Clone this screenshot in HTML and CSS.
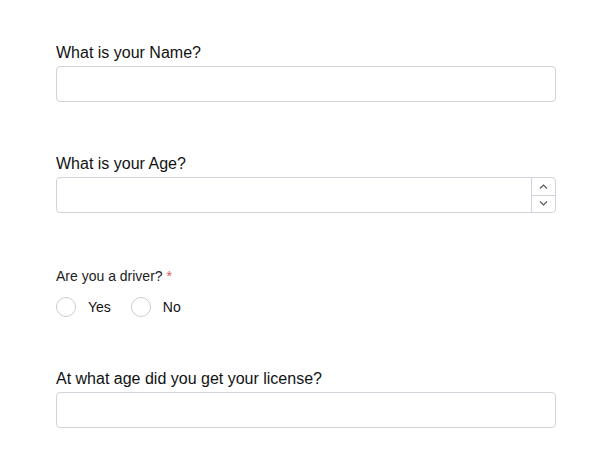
FILE: index.html
```html
<!DOCTYPE html>
<html>
<head>
<meta charset="utf-8">
<link rel="stylesheet" href="styles.css">
</head>
<body>
<form class="form">
  <div class="field">
    <label class="label" for="name">What is your Name?</label>
    <input class="input" id="name" type="text">
  </div>
  <div class="field">
    <label class="label" for="age">What is your Age?</label>
    <div class="number">
      <input class="input number-input" id="age" type="text">
      <div class="spinner">
        <span class="spin-btn">
          <svg width="9" height="5" viewBox="0 0 9 5"><path d="M1 4.5 L4.5 1 L8 4.5" fill="none" stroke="#555" stroke-width="1.1"/></svg>
        </span>
        <span class="spin-btn spin-down">
          <svg width="9" height="5" viewBox="0 0 9 5"><path d="M1 0.5 L4.5 4 L8 0.5" fill="none" stroke="#555" stroke-width="1.1"/></svg>
        </span>
      </div>
    </div>
  </div>
  <div class="field radio-field">
    <div class="small-label">Are you a driver? <span class="req">*</span></div>
    <div class="radios">
      <label class="radio"><span class="circle"></span>Yes</label>
      <label class="radio"><span class="circle"></span>No</label>
    </div>
  </div>
  <div class="field">
    <label class="label" for="lic">At what age did you get your license?</label>
    <input class="input" id="lic" type="text">
  </div>
</form>
</body>
</html>
```
FILE: styles.css
```css
html, body {
  margin: 0;
  padding: 0;
  background: #fff;
  font-family: "Liberation Sans", Arial, sans-serif;
  color: #111;
}
.form {
  width: 500px;
  padding: 43px 0 0 56px;
  display: flex;
  flex-direction: column;
  gap: 52px;
}
.field {
  display: flex;
  flex-direction: column;
}
.label {
  font-size: 16px;
  line-height: 20px;
  margin-bottom: 3px;
  color: #111;
}
.input {
  box-sizing: border-box;
  width: 500px;
  height: 36px;
  border: 1px solid #ced4da;
  border-radius: 4px;
  background: #fff;
  margin: 0;
  padding: 0 10px;
  font: inherit;
  outline: none;
}
.number {
  position: relative;
  width: 500px;
  height: 36px;
}
.spinner {
  position: absolute;
  right: 1px;
  top: 1px;
  bottom: 1px;
  width: 23px;
  border-left: 1px solid #ced4da;
  display: flex;
  flex-direction: column;
}
.spin-btn {
  flex: 1;
  display: flex;
  align-items: center;
  justify-content: center;
}
.spin-down {
  border-top: 1px solid #ced4da;
}
.radio-field {
  padding-top: 2px;
}
.small-label {
  font-size: 14px;
  line-height: 18px;
  color: #222;
}
.req {
  color: #e55353;
}
.radios {
  display: flex;
  gap: 20px;
  margin-top: 12px;
}
.radio {
  display: flex;
  align-items: center;
  gap: 12px;
  font-size: 14px;
  color: #111;
}
.circle {
  box-sizing: border-box;
  width: 20px;
  height: 20px;
  border: 1px solid #c8ccd0;
  border-radius: 50%;
  background: #fff;
}
```
